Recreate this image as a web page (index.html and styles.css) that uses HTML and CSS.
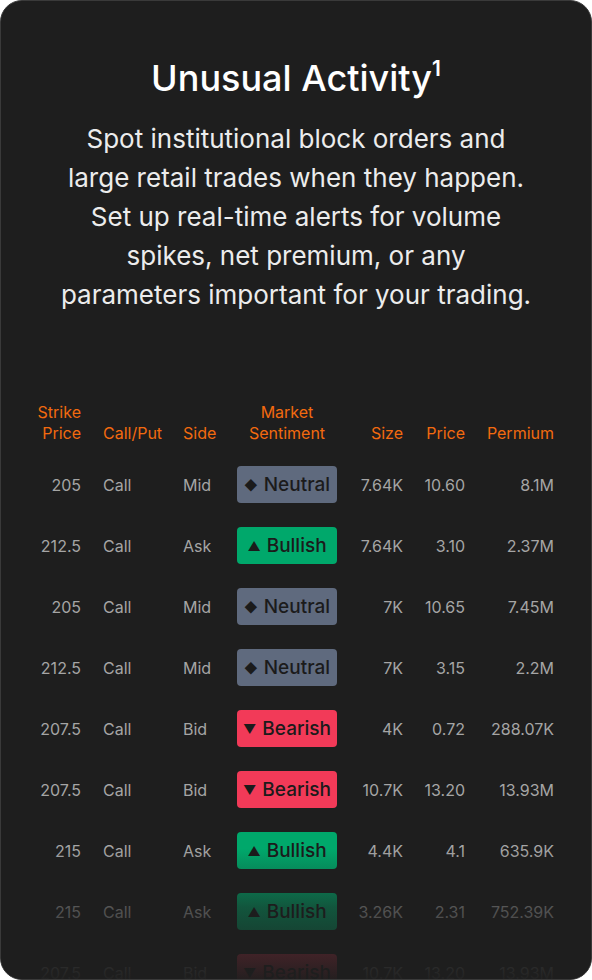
FILE: index.html
```html
<!DOCTYPE html>
<html lang="en">
<head>
    <meta charset="UTF-8">
    <title>Unusual Activity</title>
    <link rel="stylesheet" href="styles.css">
</head>
<body>
    <div class="card">
        <h1 class="title">Unusual Activity<sup>1</sup></h1>
        <p class="intro">Spot institutional block orders and<br>large retail trades when they happen.<br>Set up real-time alerts for volume<br>spikes, net premium, or any<br>parameters important for your trading.</p>

        <div class="table">
            <div class="row head">
                <div class="c strike">Strike<br>Price</div>
                <div class="c type">Call/Put</div>
                <div class="c side">Side</div>
                <div class="c senti">Market<br>Sentiment</div>
                <div class="c size">Size</div>
                <div class="c price">Price</div>
                <div class="c prem">Permium</div>
            </div>
            <div class="row">
                <div class="c strike">205</div><div class="c type">Call</div><div class="c side">Mid</div>
                <div class="c senti"><span class="badge neutral"><i>&#9670;</i>Neutral</span></div>
                <div class="c size">7.64K</div><div class="c price">10.60</div><div class="c prem">8.1M</div>
            </div>
            <div class="row">
                <div class="c strike">212.5</div><div class="c type">Call</div><div class="c side">Ask</div>
                <div class="c senti"><span class="badge bull"><i>&#9650;</i>Bullish</span></div>
                <div class="c size">7.64K</div><div class="c price">3.10</div><div class="c prem">2.37M</div>
            </div>
            <div class="row">
                <div class="c strike">205</div><div class="c type">Call</div><div class="c side">Mid</div>
                <div class="c senti"><span class="badge neutral"><i>&#9670;</i>Neutral</span></div>
                <div class="c size">7K</div><div class="c price">10.65</div><div class="c prem">7.45M</div>
            </div>
            <div class="row">
                <div class="c strike">212.5</div><div class="c type">Call</div><div class="c side">Mid</div>
                <div class="c senti"><span class="badge neutral"><i>&#9670;</i>Neutral</span></div>
                <div class="c size">7K</div><div class="c price">3.15</div><div class="c prem">2.2M</div>
            </div>
            <div class="row">
                <div class="c strike">207.5</div><div class="c type">Call</div><div class="c side">Bid</div>
                <div class="c senti"><span class="badge bear"><i>&#9660;</i>Bearish</span></div>
                <div class="c size">4K</div><div class="c price">0.72</div><div class="c prem">288.07K</div>
            </div>
            <div class="row">
                <div class="c strike">207.5</div><div class="c type">Call</div><div class="c side">Bid</div>
                <div class="c senti"><span class="badge bear"><i>&#9660;</i>Bearish</span></div>
                <div class="c size">10.7K</div><div class="c price">13.20</div><div class="c prem">13.93M</div>
            </div>
            <div class="row">
                <div class="c strike">215</div><div class="c type">Call</div><div class="c side">Ask</div>
                <div class="c senti"><span class="badge bull"><i>&#9650;</i>Bullish</span></div>
                <div class="c size">4.4K</div><div class="c price">4.1</div><div class="c prem">635.9K</div>
            </div>
            <div class="row">
                <div class="c strike">215</div><div class="c type">Call</div><div class="c side">Ask</div>
                <div class="c senti"><span class="badge bull"><i>&#9650;</i>Bullish</span></div>
                <div class="c size">3.26K</div><div class="c price">2.31</div><div class="c prem">752.39K</div>
            </div>
            <div class="row">
                <div class="c strike">207.5</div><div class="c type">Call</div><div class="c side">Bid</div>
                <div class="c senti"><span class="badge bear"><i>&#9660;</i>Bearish</span></div>
                <div class="c size">10.7K</div><div class="c price">13.20</div><div class="c prem">13.93M</div>
            </div>
        </div>
        <div class="fade"></div>
    </div>
</body>
</html>
```

FILE: styles.css
```css
body {
    margin: 0;
    background-color: #fff;
    font-family: Inter, "Noto Sans", sans-serif;
}
.card {
    position: relative;
    box-sizing: border-box;
    width: 592px;
    height: 980px;
    background-color: #1e1e1e;
    border: 1px solid #3a3a3a;
    border-radius: 22px;
    overflow: hidden;
    padding: 51px 0 0;
    color: #fff;
}
.title {
    margin: 0;
    text-align: center;
    font-size: 36px;
    font-weight: 500;
    line-height: 52px;
}
.title sup {
    font-size: 21px;
    font-weight: 600;
    vertical-align: 15px;
    line-height: 0;
}
.intro {
    margin: 15px 0 0;
    text-align: center;
    font-size: 26px;
    line-height: 39px;
    color: #ececec;
}
.table {
    margin-top: 88px;
}
.row {
    display: grid;
    grid-template-columns: 80px 102px 54px 100px 66px 62px 89px;
    align-items: center;
    height: 61px;
    font-size: 16px;
    color: #a5a5a5;
}
.row.head {
    height: auto;
    align-items: end;
    line-height: 21px;
    color: #f26a0f;
    margin-bottom: 10px;
}
.c {
    white-space: nowrap;
}
.strike, .size, .price, .prem {
    text-align: right;
}
.strike {
    padding-left: 24px;
}
.type {
    padding-left: 22px;
}
.senti {
    text-align: center;
}
.badge {
    display: flex;
    align-items: center;
    justify-content: center;
    height: 37px;
    border-radius: 4px;
    font-size: 19px;
    font-weight: 500;
    color: #1b1b1b;
}
.badge i {
    font-style: normal;
    font-size: 13px;
    margin-right: 6px;
}
.neutral {
    background-color: #5f6a7e;
}
.bull {
    background-color: #00a86b;
}
.bear {
    background-color: #f23a58;
}
.fade {
    position: absolute;
    left: 0;
    right: 0;
    bottom: 0;
    height: 130px;
    background: linear-gradient(rgba(30, 30, 30, 0), rgba(30, 30, 30, 0.6) 45%, rgba(30, 30, 30, 0.97));
}
```
